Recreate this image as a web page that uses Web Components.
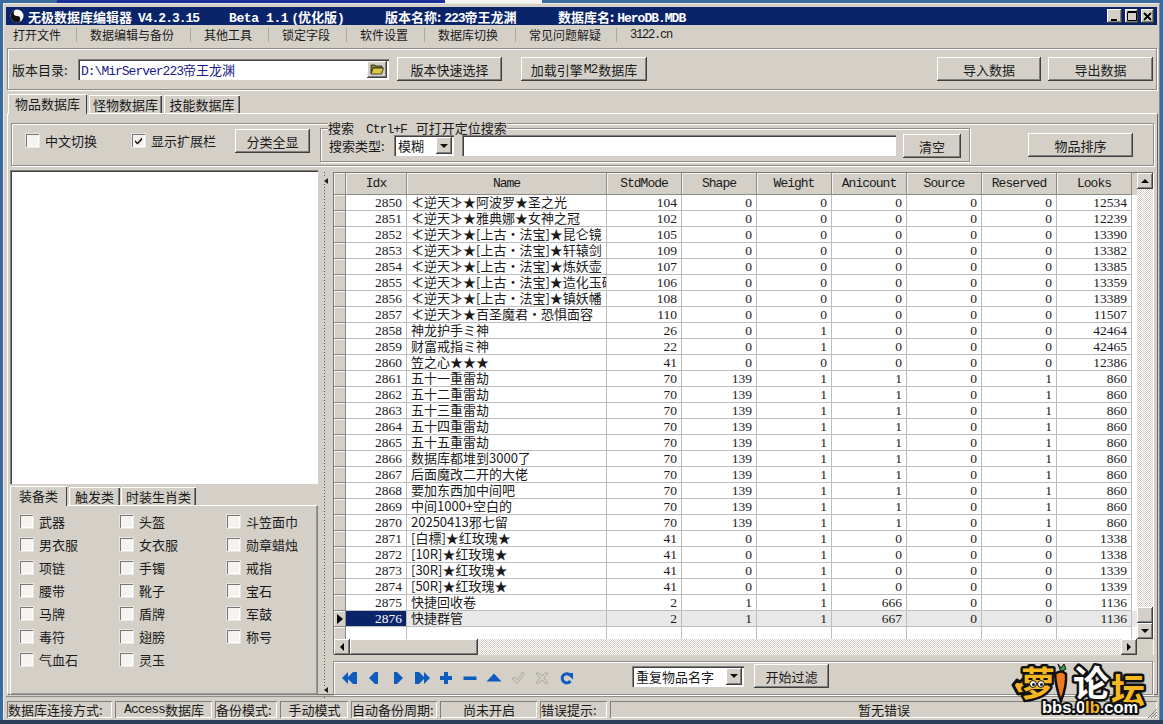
<!DOCTYPE html>
<html lang="zh">
<head>
<meta charset="utf-8">
<title>无极数据库编辑器</title>
<style>
  html, body { margin: 0; height: 724px; overflow: hidden; background: #3a6a9e; }
  body { font: 13px "Noto Sans CJK SC", sans-serif; color: #1a1a1a; }
</style>
</head>
<body>
<db-window></db-window>
<script>
const LATIN = `.m { font: 13px "Liberation Mono", monospace; letter-spacing: -1px; }`;
const RAISED = `box-shadow: inset -1px -1px #404040, inset 1px 1px #fff, inset -2px -2px #808080;`;
const SUNKEN = `box-shadow: inset 1px 1px #808080, inset 2px 2px #404040, inset -1px -1px #fff;`;
const GROOVE = `border: 1px solid #8c8c88; box-shadow: inset 1px 1px #fff, 1px 1px #fff;`;

function define(name, html, extra) {
  const tpl = document.createElement('template');
  tpl.innerHTML = html;
  class El extends HTMLElement {
    constructor() {
      super();
      this.attachShadow({ mode: 'open' });
      this.shadowRoot.appendChild(tpl.content.cloneNode(true));
      if (extra) extra(this.shadowRoot, this);
    }
  }
  customElements.define(name, El);
}

define('ui-button', `
  <style>
    :host { display: inline-flex; align-items: center; justify-content: center; box-sizing: border-box;
      height: 24px; flex: none; background: #d4d0c8; ${RAISED} }
  </style><slot></slot>`);

define('ui-check', `
  <style>
    :host { display: flex; align-items: center; gap: 6px; height: 16px; white-space: nowrap; }
    i { width: 13px; height: 13px; box-sizing: border-box; background: #f4f3ef; flex: none; position: relative;
      box-shadow: inset 1px 1px #777, inset -1px -1px #fff, 0 0 0 1px #e8e6e0; }
    svg { display: none; position: absolute; left: 2px; top: 2px; }
    :host([checked]) svg { display: block; }
  </style>
  <i><svg width="9" height="9" viewBox="0 0 9 9"><path d="M1 4l2.5 2.5L8 1.5v2.5L3.5 8.5 1 6z" fill="#111"/></svg></i><slot></slot>`);

define('ui-combo', `
  <style>
    :host { display: flex; align-items: center; box-sizing: border-box; height: 21px; flex: none; background: #fff;
      padding: 2px 2px 2px 4px; ${SUNKEN} }
    span { flex: 1; white-space: nowrap; }
    b { width: 16px; height: 17px; background: #d4d0c8; display: flex; align-items: center; justify-content: center; ${RAISED} }
    b::after { content: ""; border: 4px solid transparent; border-top: 4px solid #111; border-bottom: 0; }
  </style><span><slot></slot></span><b></b>`);

define('ui-tabs', `
  <style>
    :host { display: flex; align-items: flex-end; height: 20px; flex: none; }
    ::slotted(ui-tab) { margin-right: 2px; }
  </style><slot></slot>`);

define('ui-tab', `
  <style>
    :host { display: flex; align-items: center; justify-content: center; box-sizing: border-box; height: 18px; flex: none;
      white-space: nowrap; background: #d4d0c8; padding-top: 1px;
      box-shadow: inset 1px 1px #fff, inset -1px 0 #404040, inset -2px 0 #808080; }
    :host([active]) { height: 20px; padding-bottom: 3px; box-shadow: inset 1px 1px #fff, inset -1px 0 #404040; position: relative; margin-bottom: -1px; z-index: 1; }
  </style><slot></slot>`);

define('ui-status', `
  <style>
    :host { display: flex; align-items: center; box-sizing: border-box; height: 17px; flex: none; white-space: nowrap; padding-left: 1px;
      box-shadow: inset 1px 1px #808080, inset -1px -1px #fff; }
    :host([center]) { justify-content: center; }
  </style><slot></slot>`);

const NAV_ICONS = {
  first: '<path d="M0 8l6-6v12z"/><path d="M5 8l6-6h4v12h-4z"/>',
  prev: '<path d="M3 8l6-6h3v12H9z"/>',
  next: '<path d="M13 8L7 2H4v12h3z"/>',
  last: '<path d="M16 8l-6-6v12z"/><path d="M11 8L5 2H1v12h4z"/>',
  plus: '<path d="M6 2h4v4h4v4h-4v4H6v-4H2V6h4z"/>',
  minus: '<path d="M1.5 6.5h13v3.5h-13z"/>',
  up: '<path d="M8 3.5l7.5 8H.5z"/>',
  check: '<path d="M2 9l2.5-2 2.5 2.5L13 2l1.5 1.5L7 13.5z" fill="#d4d0c8" stroke="#aaa8a2"/>',
  cross: '<path d="M2 3h3l3 3 3-3h3l-4 5 4 5h-3l-3-3-3 3H2l4-5z" fill="#d4d0c8" stroke="#aaa8a2"/>',
  refresh: '<path d="M12.5 5.6A4.6 4.6 0 1 0 12.5 11" fill="none" stroke="#0f5cbf" stroke-width="3"/><path d="M8 3h7v6.5z"/>'
};

define('nav-icon', `
  <style>
    :host { display: block; width: 24px; height: 16px; flex: none; text-align: center; }
    svg { width: 16px; height: 16px; fill: #0f5cbf; }
  </style><svg viewBox="0 0 16 16"></svg>`, (root, el) => {
  root.querySelector('svg').innerHTML = NAV_ICONS[el.getAttribute('name')];
});

const COLS = ['StdMode', 'Shape', 'Weight', 'Anicount', 'Source', 'Reserved', 'Looks'];
const NT = '≮逆天≯★';
const SG = NT + '[上古·法宝]★';
const ROWS = [
  [2850, NT + '阿波罗★圣之光', 104, 0, 0, 0, 0, 0, 12534],
  [2851, NT + '雅典娜★女神之冠', 102, 0, 0, 0, 0, 0, 12239],
  [2852, SG + '昆仑镜', 105, 0, 0, 0, 0, 0, 13390],
  [2853, SG + '轩辕剑', 109, 0, 0, 0, 0, 0, 13382],
  [2854, SG + '炼妖壶', 107, 0, 0, 0, 0, 0, 13385],
  [2855, SG + '造化玉碟', 106, 0, 0, 0, 0, 0, 13359],
  [2856, SG + '镇妖幡', 108, 0, 0, 0, 0, 0, 13389],
  [2857, NT + '百圣魔君·恐惧面容', 110, 0, 0, 0, 0, 0, 11507],
  [2858, '神龙护手ミ神', 26, 0, 1, 0, 0, 0, 42464],
  [2859, '财富戒指ミ神', 22, 0, 1, 0, 0, 0, 42465],
  [2860, '笠之心★★★', 41, 0, 0, 0, 0, 0, 12386],
  [2861, '五十一重雷劫', 70, 139, 1, 1, 0, 1, 860],
  [2862, '五十二重雷劫', 70, 139, 1, 1, 0, 1, 860],
  [2863, '五十三重雷劫', 70, 139, 1, 1, 0, 1, 860],
  [2864, '五十四重雷劫', 70, 139, 1, 1, 0, 1, 860],
  [2865, '五十五重雷劫', 70, 139, 1, 1, 0, 1, 860],
  [2866, '数据库都堆到3000了', 70, 139, 1, 1, 0, 1, 860],
  [2867, '后面魔改二开的大佬', 70, 139, 1, 1, 0, 1, 860],
  [2868, '要加东西加中间吧', 70, 139, 1, 1, 0, 1, 860],
  [2869, '中间1000+空白的', 70, 139, 1, 1, 0, 1, 860],
  [2870, '20250413邪七留', 70, 139, 1, 1, 0, 1, 860],
  [2871, '[白標]★红玫瑰★', 41, 0, 1, 0, 0, 0, 1338],
  [2872, '[10R]★红玫瑰★', 41, 0, 1, 0, 0, 0, 1338],
  [2873, '[30R]★红玫瑰★', 41, 0, 1, 0, 0, 0, 1339],
  [2874, '[50R]★红玫瑰★', 41, 0, 1, 0, 0, 0, 1339],
  [2875, '快捷回收卷', 2, 1, 1, 666, 0, 0, 1136],
  [2876, '快捷群管', 2, 1, 1, 667, 0, 0, 1136]
];

define('data-grid', `
  <style>
    :host { display: flex; flex-direction: column; box-sizing: border-box; width: 821px; height: 483px; flex: none;
      border: 1px solid #777; border-right-color: #fff; border-bottom-color: #fff; background: #fff; }
    .main { display: flex; height: 466px; }
    .cells { width: 803px; overflow: hidden; }
    .row { display: grid; grid-template-columns: 12px 61px 200px repeat(7, 75px); height: 16px; }
    .head { height: 22px; background: #d4d0c8; width: 803px; }
    .row > div { box-sizing: border-box; border-right: 1px solid #bdbdbd; border-bottom: 1px solid #bdbdbd;
      overflow: hidden; white-space: nowrap; line-height: 13px; padding: 0 4px; }
    .row > .num { text-align: right; font: 13.5px/15px "Liberation Serif", serif; }
    .head > div { text-align: center; padding: 0; border-right-color: #8a8a86; border-bottom-color: #8a8a86;
      font: 13px/21px "Liberation Mono", monospace; letter-spacing: -1px; box-shadow: inset 1px 1px #f4f3ef; }
    .row > .ind { background: #d4d0c8; padding: 0; display: flex; align-items: center; border-color: #8a8a86; box-shadow: inset 1px 1px #f4f3ef; }
    .sel { background: #e8e8e8; }
    .sel > .idx { background: #0a246a; color: #fff; }
    .ind i { border: 5px solid transparent; border-left: 6px solid #000; border-right: 0; margin-left: 3px; }
    .blank > div { border-bottom: 0; }
    .vbar { width: 16px; display: flex; flex-direction: column; background: conic-gradient(#fff 25%, #d4d0c8 0 50%, #fff 0 75%, #d4d0c8 0) 0 0/2px 2px; }
    .hbar { display: flex; height: 16px; background: conic-gradient(#fff 25%, #d4d0c8 0 50%, #fff 0 75%, #d4d0c8 0) 0 0/2px 2px; }
    .sb { flex: none; background: #d4d0c8; box-sizing: border-box; display: flex; align-items: center; justify-content: center; ${RAISED} }
    .sq { width: 16px; height: 16px; }
    .u::after { content: ""; border: 4px solid transparent; border-bottom-color: #000; border-top: 0; }
    .d::after { content: ""; border: 4px solid transparent; border-top-color: #000; border-bottom: 0; }
    .l::after { content: ""; border: 4px solid transparent; border-right-color: #000; border-left: 0; }
    .r::after { content: ""; border: 4px solid transparent; border-left-color: #000; border-right: 0; }
    .fill { flex: 1; }
    .corner { width: 16px; height: 16px; background: #d4d0c8; flex: none; }
  </style>
  <div class="main">
    <div class="cells"></div>
    <div class="vbar">
      <div class="sb sq u"></div><div class="fill"></div>
      <div class="sb sq"></div><div class="sb sq d"></div>
    </div>
  </div>
  <div class="hbar">
    <div class="sb sq l"></div>
    <div class="sb" style="width:128px"></div>
    <div class="fill"></div>
    <div class="sb sq r"></div><div class="corner"></div>
  </div>`, root => {
  const cells = root.querySelector('.cells');
  let html = '<div class="row head"><div></div><div>Idx</div><div>Name</div>' + COLS.map(c => `<div>${c}</div>`).join('') + '</div>';
  ROWS.forEach((r, i) => {
    const last = i === ROWS.length - 1;
    html += `<div class="row${last ? ' sel' : ''}"><div class="ind">${last ? '<i></i>' : ''}</div>`;
    html += `<div class="num idx">${r[0]}</div><div>${r[1]}</div>`;
    html += r.slice(2).map(v => `<div class="num">${v}</div>`).join('') + '</div>';
  });
  html += '<div class="row blank"><div class="ind"></div>' + '<div></div>'.repeat(9) + '</div>';
  cells.innerHTML = html;
});

define('path-bar', `
  <style>
    :host { display: flex; align-items: center; box-sizing: border-box; height: 42px; margin: 0 0 0 1px; width: 1150px; flex: none; ${GROOVE} padding: 0 4px 0 4px; }
    ${LATIN}
    label { width: 66px; flex: none; }
    .path { width: 311px; height: 21px; box-sizing: border-box; background: #fff; color: #1a1a8a; display: flex; align-items: center; padding: 0 2px 0 3px; flex: none; ${SUNKEN} white-space: nowrap; }
    .path span { flex: 1; }
    .path span.m { flex: none; }
    .fold { width: 20px; height: 17px; background: #d4d0c8; display: flex; align-items: center; justify-content: center; ${RAISED} }
    ui-button { margin-left: 8px; }
  </style>
  <label>版本目录:</label>
  <div class="path"><span><span class="m">D:\\MirServer223</span>帝王龙渊</span>
    <div class="fold"><svg width="14" height="12" viewBox="0 0 14 12"><path d="M1 2h4l1 1h6v2H3L1 10z" fill="#8a8620" stroke="#222" stroke-width=".8"/><path d="M3 5h10.5l-2 6H1z" fill="#d8c83c" stroke="#222" stroke-width=".8"/></svg></div>
  </div>
  <ui-button style="width:105px">版本快速选择</ui-button>
  <ui-button style="width:126px;margin-left:19px">加载引擎<span class="m" style="margin:0 1px">M2</span>数据库</ui-button>
  <ui-button style="width:104px;margin-left:290px">导入数据</ui-button>
  <ui-button style="width:105px;margin-left:7px">导出数据</ui-button>`);

define('search-bar', `
  <style>
    :host { display: flex; align-items: flex-start; box-sizing: border-box; height: 43px; flex: none; ${GROOVE} margin: 0 0 0 3px; width: 1143px; position: relative; }
    ${LATIN}
    fieldset { margin: -3px 0 0 0; padding: 0 0 0 8px; height: 41px; box-sizing: border-box; width: 650px; flex: none; position: relative;
      border: 1px solid #8c8c88; box-shadow: inset 1px 1px #fff, 1px 1px #fff; background: #d4d0c8; display: flex; align-items: center; }
    legend { padding: 0; margin-left: -1px; line-height: 14px; height: 14px; background: #d4d0c8; white-space: nowrap; }
    .row { display: flex; align-items: center; height: 21px; margin-top: -5px; }
    .lab { width: 65px; flex: none; }
    .chk { margin: 8px 0 0 14px; }
  </style>
  <ui-check class="chk" style="width:106px">中文切换</ui-check>
  <ui-check class="chk" checked style="margin-left:0;width:103px">显示扩展栏</ui-check>
  <ui-button style="width:75px;margin:5px 10px 0 0">分类全显</ui-button>
  <fieldset>
    <legend>搜索<span class="m" style="margin:0 9px 0 12px">Ctrl+F</span>可打开定位搜索</legend>
    <div class="row">
      <span class="lab">搜索类型:</span>
      <ui-combo style="width:60px">模糊</ui-combo>
      <div style="width:434px;height:21px;margin-left:8px;background:#fff;box-sizing:border-box;${SUNKEN}"></div>
      <ui-button style="width:58px;margin-left:7px;margin-top:1px">清空</ui-button>
    </div>
  </fieldset>
  <ui-button style="width:105px;margin:9px 0 0 58px">物品排序</ui-button>`);

const CHECKS = ['武器','头盔','斗笠面巾','男衣服','女衣服','勋章蜡烛','项链','手镯','戒指','腰带','靴子','宝石','马牌','盾牌','军鼓','毒符','翅膀','称号','气血石','灵玉'];

define('filter-pane', `
  <style>
    :host { display: flex; flex-direction: column; width: 308px; flex: none; margin-top: -2px; }
    .list { height: 314px; flex: none; background: #fff; ${SUNKEN} }
    ui-tabs { margin-top: 1px; }
    .page { height: 190px; box-sizing: border-box; border: 1px solid #808080; border-top-color: #fff; border-left-color: #fff; box-shadow: inset -1px -1px #9a9a96; 
      display: grid; grid-template-columns: 100px 107px 1fr; grid-auto-rows: 23px; padding: 7px 0 0 9px; align-content: start; }
  </style>
  <div class="list"></div>
  <ui-tabs>
    <ui-tab active style="width:57px">装备类</ui-tab>
    <ui-tab style="width:51px;margin-right:1px">触发类</ui-tab>
    <ui-tab style="width:75px">时装生肖类</ui-tab>
  </ui-tabs>
  <div class="page"></div>`, root => {
  const page = root.querySelector('.page');
  CHECKS.forEach(c => {
    const el = document.createElement('ui-check');
    el.textContent = c;
    page.appendChild(el);
  });
});

define('nav-bar', `
  <style>
    :host { display: flex; align-items: center; box-sizing: border-box; width: 820px; height: 34px; flex: none; ${GROOVE} padding-left: 4px; }
    ui-combo, ui-button { margin-top: -4px; }
  </style>
  <nav-icon name="first"></nav-icon><nav-icon name="prev"></nav-icon><nav-icon name="next"></nav-icon><nav-icon name="last"></nav-icon>
  <nav-icon name="plus"></nav-icon><nav-icon name="minus"></nav-icon><nav-icon name="up"></nav-icon>
  <nav-icon name="check"></nav-icon><nav-icon name="cross"></nav-icon><nav-icon name="refresh"></nav-icon>
  <ui-combo style="width:112px;margin-left:54px">重复物品名字</ui-combo>
  <ui-button style="width:75px;margin-left:10px">开始过滤</ui-button>`);

define('item-page', `
  <style>
    :host { display: flex; flex-direction: column; box-sizing: border-box; height: 582px; width: 1151px; margin-left: 1px; flex: none; padding-top: 9px;
      border-top: 1px solid #fff; border-left: 1px solid #fff; border-right: 1px solid #666; border-bottom: 1px solid #666; }
    .body { display: flex; margin: 6px 0 0 2px; }
    .split { width: 15px; flex: none; height: 526px; display: flex; flex-direction: column; justify-content: space-between; align-items: center; box-sizing: border-box; padding: 6px 0 5px;
      background: repeating-linear-gradient(#555 0 1px, transparent 1px 3px) 6px 0/1px 100% no-repeat; }
    .split i { border: 3px solid transparent; border-right: 4px solid #222; border-left: 0; background: #d4d0c8; }
    .right { display: flex; flex-direction: column; gap: 6px; }
  </style>
  <search-bar></search-bar>
  <div class="body">
    <filter-pane></filter-pane>
    <div class="split"><i></i><i></i></div>
    <div class="right"><data-grid></data-grid><nav-bar></nav-bar></div>
  </div>`);

define('status-bar', `
  <style>
    :host { display: flex; gap: 3px; box-sizing: border-box; height: 22px; flex: none; padding: 4px 0 0 1px; border-top: 1px solid #8c8c88; margin-top: 1px; }
    ${LATIN}
  </style>
  <ui-status style="width:105px">数据库连接方式:</ui-status>
  <ui-status center style="width:97px"><span class="m">Access</span>数据库</ui-status>
  <ui-status style="width:62px">备份模式:</ui-status>
  <ui-status center style="width:68px">手动模式</ui-status>
  <ui-status style="width:86px">自动备份周期:</ui-status>
  <ui-status center style="width:97px">尚未开启</ui-status>
  <ui-status style="width:67px">错误提示:</ui-status>
  <ui-status center style="width:547px">暂无错误</ui-status>`);

define('forum-logo', `
  <style>
    :host { position: absolute; left: 1004px; top: 658px; width: 150px; height: 62px; display: block; }
    svg { overflow: visible; display: block; }
    text { paint-order: stroke; stroke: #111; stroke-linejoin: round; font-family: "Noto Sans CJK SC", sans-serif; font-weight: 700; }
  </style>
  <svg width="150" height="62" viewBox="0 0 150 62">
    <path d="M9 27l4-5 3 2 3-3 5 6-2 8-8 1z" fill="#f6b820" stroke="#111" stroke-width="3" stroke-linejoin="round"/>
    <text x="17" y="38" font-size="34" fill="#f6b820" stroke-width="5">萝</text>
    <circle cx="29" cy="26" r="3.4" fill="#fff" stroke="#111"/><circle cx="37" cy="26" r="3.4" fill="#fff" stroke="#111"/>
    <circle cx="29.5" cy="26.5" r="1.5" fill="#111"/><circle cx="37.5" cy="26.5" r="1.5" fill="#111"/>
    <path d="M54 6l3 4 3-4 2 5-5 3z" fill="#3d9b46" stroke="#111"/>
    <path d="M51 16q6-5 11 0 1 12-5 27-5-12-6-27z" fill="#ee7a1e" stroke="#111" stroke-width="2.5"/>
    <text x="69" y="39" font-size="36" fill="#fff" stroke-width="5">论</text>
    <text x="107" y="45" font-size="34" fill="#f6b820" stroke-width="5">坛</text>
    <text x="38" y="55" font-size="16.5" fill="#fff" stroke-width="4" style="font-family:'Liberation Sans',sans-serif">bbs.0<tspan fill="#f6b820">lb</tspan>.com</text>
  </svg>`);

define('db-window', `
  <style>
    :host { display: flex; flex-direction: column; box-sizing: border-box; width: 1163px; height: 724px; position: relative;
      background: linear-gradient(#3a6a9e 0 3px, transparent 3px) ; padding: 0; overflow: hidden; }
    ${LATIN}
    .strip { height: 3px; flex: none; margin-left: 57px; width: 485px; background: linear-gradient(90deg, #1c2f9a 0 80%, #f4f4f4 80%); }
    .frame { flex: none; width: 1157px; height: 717px; margin-left: 3px; box-sizing: border-box; background: #d4d0c8; padding: 3px 0 0 2px;
      border-top: 1px solid #eceae6; border-left: 1px solid #eceae6; border-right: 1px solid #888; }
    .title { display: flex; align-items: center; width: 1151px; height: 18px; flex: none; background: #0a246a; color: #fff; font-weight: 700; box-sizing: border-box; padding-left: 4px; white-space: nowrap; }
    .title .m { font-weight: 700; }
    .title svg { flex: none; margin-right: 4px; }
    .seg { flex: none; }
    .ctl { margin-left: auto; display: flex; margin-right: 3px; }
    .ctl b { width: 13px; height: 14px; background: #d4d0c8; color: #000; display: flex; align-items: center; justify-content: center; ${RAISED} }
    .menu { display: flex; height: 20px; align-items: center; font-size: 12px; flex: none; white-space: nowrap; }
    .menu span { box-sizing: border-box; padding-left: 7px; border-right: 1px solid #a8a8a4; height: 14px; line-height: 14px; flex: none; }
    .menu span:last-child { border: 0; font: 12px/14px "Liberation Mono", monospace; letter-spacing: -1.2px; }
    ui-tabs { margin: 3px 0 0 2px; }
    path-bar { margin-top: 3px; }
    .bottom { background: #2c3e58; height: 4px; flex: none; margin: 0 -1px; }
    .grip { position: absolute; left: 1147px; top: 708px; }
  </style>
  <div class="strip"></div>
  <div class="frame">
    <div class="title">
      <svg width="14" height="14" viewBox="0 0 14 14"><circle cx="7" cy="7" r="6.5" fill="#fff"/><path d="M7 .5a6.5 6.5 0 0 0 0 13 3.25 3.25 0 0 0 0-6.5 3.25 3.25 0 0 1 0-6.5z" fill="#111"/><circle cx="7" cy="3.7" r="1" fill="#fff"/><circle cx="7" cy="10.3" r="1" fill="#111"/></svg>
      <span class="seg" style="width:201px">无极数据库编辑器 <span class="m" style="margin-left:3px">V4.2.3.15</span></span>
      <span class="seg" style="width:156px"><span class="m" style="letter-spacing:-.4px">Beta 1.1</span> <span class="m">(</span>优化版<span class="m">)</span></span>
      <span class="seg" style="width:173px">版本名称: <span class="m">223</span>帝王龙渊</span>
      <span class="seg">数据库名: <span class="m">HeroDB.MDB</span></span>
      <div class="ctl">
        <b style="width:15px;margin-right:3px"><svg style="margin:0" width="9" height="9" viewBox="0 0 9 9"><path d="M1 7h6v2H1z" fill="#000"/></svg></b>
        <b style="margin-right:3px"><svg style="margin:0" width="10" height="10" viewBox="0 0 10 10"><path d="M.5 1.5h9v8h-9zM.5.5h9v1" fill="none" stroke="#000"/></svg></b>
        <b><svg style="margin:0" width="9" height="9" viewBox="0 0 9 9"><path d="M1 1l7 7M8 1L1 8" stroke="#000" stroke-width="1.8"/></svg></b>
      </div>
    </div>
    <div class="menu">
      <span style="width:71px">打开文件</span><span style="width:114px;padding-left:13px">数据编辑与备份</span>
      <span style="width:78px;padding-left:13px">其他工具</span><span style="width:78px;padding-left:13px">锁定字段</span>
      <span style="width:78px;padding-left:13px">软件设置</span><span style="width:91px;padding-left:13px">数据库切换</span>
      <span style="width:101px;padding-left:13px">常见问题解疑</span><span style="padding-left:13px">3122.cn</span>
    </div>
    <path-bar></path-bar>
    <ui-tabs>
      <ui-tab active style="width:79px">物品数据库</ui-tab>
      <ui-tab style="width:73px">怪物数据库</ui-tab>
      <ui-tab style="width:76px">技能数据库</ui-tab>
    </ui-tabs>
    <item-page></item-page>
    <status-bar></status-bar>
  </div>
  <div class="bottom"></div>
  <svg class="grip" width="11" height="11" viewBox="0 0 11 11"><path d="M10 1L1 10M10 4L4 10M10 7L7 10" stroke="#808080"/></svg>
  <forum-logo></forum-logo>`);
</script>
</body>
</html>
